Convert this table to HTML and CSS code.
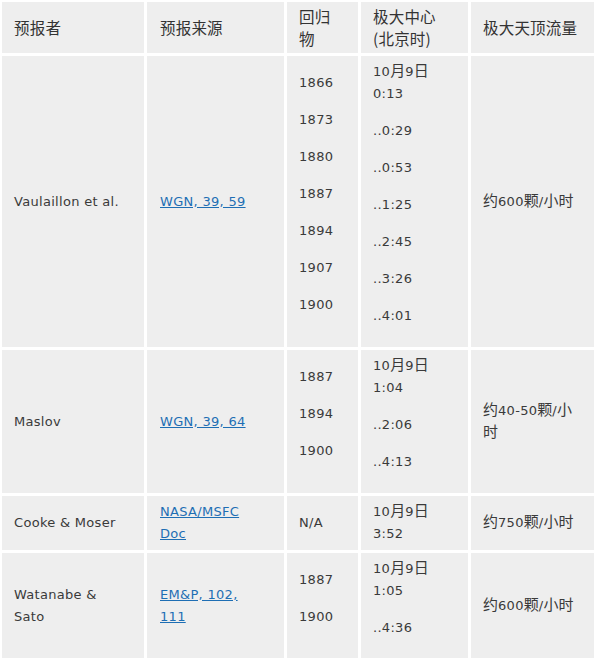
FILE: index.html
```html
<!DOCTYPE html>
<html lang="zh">
<head>
<meta charset="utf-8">
<title>流星雨预报</title>
<link rel="stylesheet" href="styles.css">
</head>
<body>
<table class="fc">
<colgroup>
<col class="w1"><col class="w2"><col class="w3"><col class="w4"><col class="w5">
</colgroup>
<thead>
<tr>
<th>预报者</th>
<th class="c2">预报来源</th>
<th>回归<br>物</th>
<th>极大中心<br>(北京时)</th>
<th>极大天顶流量</th>
</tr>
</thead>
<tbody>
<tr class="r1">
<td>Vaulaillon et al.</td>
<td class="c2"><a href="#">WGN, 39, 59</a></td>
<td class="list"><p>1866</p><p>1873</p><p>1880</p><p>1887</p><p>1894</p><p>1907</p><p>1900</p></td>
<td class="list"><p>10<span class="zh">月</span>9<span class="zh">日</span><br>0:13</p><p>..0:29</p><p>..0:53</p><p>..1:25</p><p>..2:45</p><p>..3:26</p><p>..4:01</p></td>
<td><span class="zh">约</span>600<span class="zh">颗</span>/<span class="zh">小时</span></td>
</tr>
<tr>
<td>Maslov</td>
<td class="c2"><a href="#">WGN, 39, 64</a></td>
<td class="list"><p>1887</p><p>1894</p><p>1900</p></td>
<td class="list"><p>10<span class="zh">月</span>9<span class="zh">日</span><br>1:04</p><p>..2:06</p><p>..4:13</p></td>
<td><span class="zh">约</span>40-50<span class="zh">颗</span>/<span class="zh">小</span><br><span class="zh">时</span></td>
</tr>
<tr>
<td>Cooke &amp; Moser</td>
<td class="c2"><a href="#">NASA/MSFC<br>Doc</a></td>
<td>N/A</td>
<td>10<span class="zh">月</span>9<span class="zh">日</span><br>3:52</td>
<td><span class="zh">约</span>750<span class="zh">颗</span>/<span class="zh">小时</span></td>
</tr>
<tr>
<td>Watanabe &amp;<br>Sato</td>
<td class="c2"><a href="#">EM&amp;P, 102,<br>111</a></td>
<td class="list"><p>1887</p><p>1900</p></td>
<td class="list"><p>10<span class="zh">月</span>9<span class="zh">日</span><br>1:05</p><p>..4:36</p></td>
<td><span class="zh">约</span>600<span class="zh">颗</span>/<span class="zh">小时</span></td>
</tr>
</tbody>
</table>
</body>
</html>
```
FILE: styles.css
```css
html, body {
  margin: 0;
  padding: 0;
  background: #ffffff;
  overflow: hidden;
}
body {
  font-family: "DejaVu Sans", Verdana, "Noto Sans CJK SC", sans-serif;
  font-size: 13px;
  color: #3a3a3a;
  letter-spacing: 0.3px;
}
.zh {
  font-family: "Noto Sans CJK SC", sans-serif;
  font-size: 15px;
  letter-spacing: 0;
  line-height: 0;
}
.fc {
  table-layout: fixed;
  border-collapse: separate;
  border-spacing: 3px;
  margin: -1px 0 0 -1px;
  width: 600px;
}
.w1 { width: 142px; }
.w2 { width: 137px; }
.w3 { width: 71px; }
.w4 { width: 107px; }
.w5 { width: 125px; }
.fc th,
.fc td {
  background: #eeeeee;
  padding: 5px 8px 5px 12px;
  vertical-align: middle;
  text-align: left;
  font-weight: normal;
  line-height: 22px;
}
.fc th {
  font-family: "Noto Sans CJK SC", sans-serif;
  font-size: 15.5px;
  letter-spacing: 0.2px;
  padding-top: 3px;
  padding-bottom: 4px;
  line-height: 22px;
  color: #333333;
}
.fc .c2 {
  padding-left: 13px;
}
.fc .list p {
  margin: 0 0 15px 0;
}
.fc a {
  color: #1e6eb4;
  text-decoration: underline;
}
```
